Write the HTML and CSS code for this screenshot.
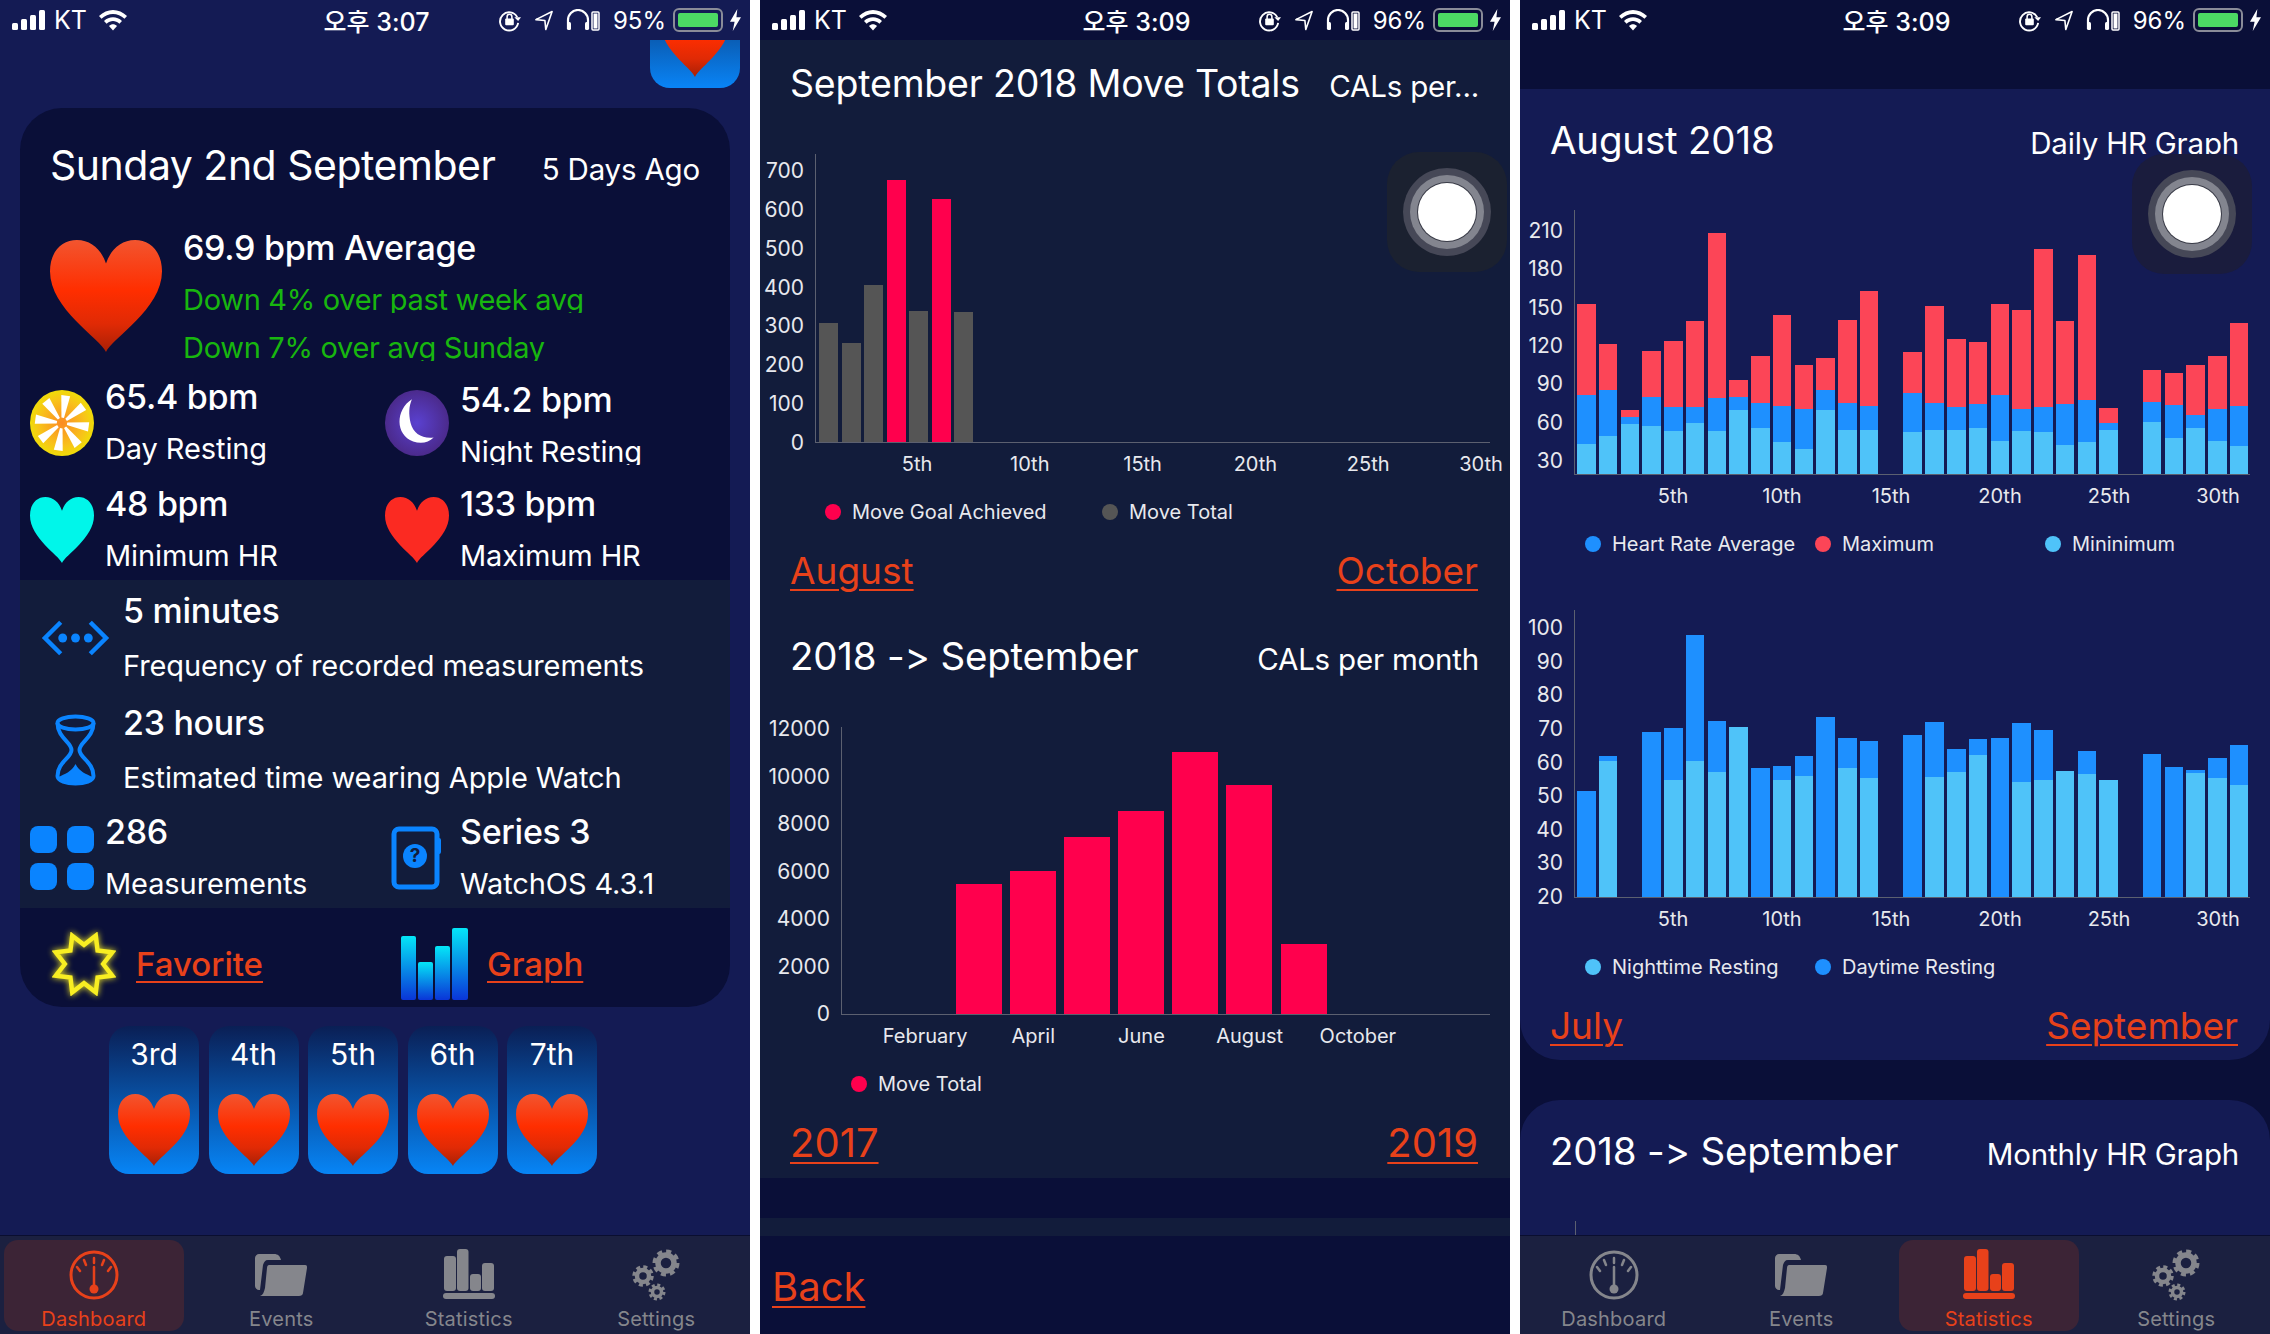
FILE: index.html
```html
<!DOCTYPE html>
<html lang="en">
<head>
  <meta charset="UTF-8">
  <title>Heart Rate Dashboard</title>
  <link rel="stylesheet" href="styles.css">
</head>
<body>
  <!-- shared shapes -->
  <svg class="defs" aria-hidden="true">
    <defs>
      <linearGradient id="heartFill" x1="0" y1="0" x2="0" y2="1">
        <stop offset="0" stop-color="#f2552f"/>
        <stop offset="0.45" stop-color="#ff2e00"/>
        <stop offset="0.75" stop-color="#e02a05"/>
        <stop offset="1" stop-color="#a82006"/>
      </linearGradient>
      <linearGradient id="graphFill" x1="0" y1="0" x2="0" y2="1">
        <stop offset="0" stop-color="#04e6f7"/>
        <stop offset="1" stop-color="#0a35d8"/>
      </linearGradient>
      <radialGradient id="sunFill">
        <stop offset="0" stop-color="#fb8a24"/>
        <stop offset="0.7" stop-color="#f8c21a"/>
        <stop offset="1" stop-color="#f0dc08"/>
      </radialGradient>
      <radialGradient id="moonFill">
        <stop offset="0" stop-color="#5a41d0"/>
        <stop offset="1" stop-color="#4b2a8c"/>
      </radialGradient>
      <symbol id="heart" viewBox="0 0 100 100" preserveAspectRatio="none">
        <path d="M50 100C45 88 0 62 0 28C0 10 11 0 24 0C37 0 46 9 50 21C54 9 63 0 76 0C89 0 100 10 100 28C100 62 55 88 50 100Z"/>
      </symbol>
      <symbol id="signal" viewBox="0 0 34 20">
        <rect x="0" y="13" width="6" height="7" rx="1.5"/><rect x="9" y="9" width="6" height="11" rx="1.5"/>
        <rect x="18" y="5" width="6" height="15" rx="1.5"/><rect x="27" y="0" width="6" height="20" rx="1.5"/>
      </symbol>
      <symbol id="wifi" viewBox="0 0 30 22">
        <path d="M1 7C9-1 21-1 29 7L26.500 9.700C19.800 3.300 10.200 3.300 3.500 9.700Z"/>
        <path d="M6 12C11 7 19 7 24 12L21.400 14.700C17.600 11.200 12.400 11.200 8.600 14.700Z"/>
        <path d="M11 17C13.500 14.800 16.500 14.800 19 17L15 21.500Z"/>
      </symbol>
      <symbol id="rotlock" viewBox="0 0 24 24">
        <path d="M20 9A9.500 9.500 0 1 0 21 15" fill="none" stroke="#fff" stroke-width="2"/>
        <path d="M17 9L24 9L21 13Z" fill="#fff"/>
        <rect x="7.500" y="10.500" width="9" height="7" rx="1" fill="#fff"/>
        <path d="M9.500 11V8.500A2.500 2.500 0 0 1 14.500 8.500V11" fill="none" stroke="#fff" stroke-width="1.600"/>
      </symbol>
      <symbol id="arrow" viewBox="0 0 20 22">
        <path d="M1 10L19 1L12 21L11 11Z" fill="none" stroke="#fff" stroke-width="1.800" stroke-linejoin="round"/>
      </symbol>
      <symbol id="phones" viewBox="0 0 34 22">
        <path d="M2 20V11A10 10 0 0 1 22 11V20" fill="none" stroke="#fff" stroke-width="2.200"/>
        <rect x="1" y="13" width="4" height="8" rx="1.500" fill="#fff"/><rect x="19" y="13" width="4" height="8" rx="1.500" fill="#fff"/>
        <rect x="26" y="3" width="7" height="18" rx="1" fill="none" stroke="#fff" stroke-width="1.500"/>
        <rect x="27.500" y="4.500" width="4" height="15" fill="#fff"/>
      </symbol>
      <symbol id="bolt" viewBox="0 0 12 24">
        <path d="M8 0L0 14H5L3 24L12 9H7Z"/>
      </symbol>
      <symbol id="gauge" viewBox="0 0 52 52">
        <circle cx="26" cy="26" r="23" fill="none" stroke="currentColor" stroke-width="3"/>
        <g stroke="currentColor" stroke-width="2.500" stroke-linecap="round">
          <line x1="26" y1="9" x2="26" y2="14"/><line x1="16" y1="11" x2="18" y2="16"/>
          <line x1="36" y1="11" x2="34" y2="16"/><line x1="9" y1="18" x2="12" y2="22"/><line x1="43" y1="18" x2="40" y2="22"/>
          <line x1="26" y1="18" x2="26" y2="37"/>
        </g>
        <circle cx="26" cy="40" r="4.500" fill="currentColor"/>
      </symbol>
      <symbol id="folder" viewBox="0 0 52 52">
        <path d="M4 5H19C23 5 25 7 26 11H13C10 11 9 13 8 16L5 41H4C2 41 0 39 0 37V9C0 7 2 5 4 5Z" fill="currentColor"/>
        <path d="M14 16H50C52 16 52 17 52 19L48 44C48 46 46 47 44 47H5C8 46 9 43 10 39L12 19C12 17 13 16 14 16Z" fill="currentColor"/>
      </symbol>
      <symbol id="statbars" viewBox="0 0 52 52">
        <rect x="1" y="7" width="12" height="35" rx="3" fill="currentColor"/><rect x="14" y="0" width="11.500" height="42" rx="3" fill="currentColor"/>
        <rect x="27" y="25" width="11" height="17" rx="3" fill="currentColor"/><rect x="39" y="14" width="12" height="28" rx="3" fill="currentColor"/>
        <rect x="0" y="44" width="52" height="6" rx="3" fill="currentColor"/>
      </symbol>
      <symbol id="gears" viewBox="0 0 50 52">
        <g fill="none" stroke="currentColor">
          <circle cx="35" cy="14" r="8" stroke-width="5.500"/><circle cx="35" cy="14" r="11.500" stroke-width="4" stroke-dasharray="5 4"/>
          <circle cx="12" cy="27" r="6" stroke-width="4.500"/><circle cx="12" cy="27" r="9" stroke-width="3.500" stroke-dasharray="4 3.070"/>
          <circle cx="26" cy="43" r="4.500" stroke-width="3.500"/><circle cx="26" cy="43" r="7" stroke-width="3" stroke-dasharray="3 2.500"/>
        </g>
      </symbol>
    </defs>
  </svg>

  <div class="phones">

    <!-- dashboard -->
    <section class="phone phone-navy">
      <div class="status status-navy">
        <div class="status-left">
          <svg class="ic-signal"><use href="#signal"/></svg><span>KT</span><svg class="ic-wifi"><use href="#wifi"/></svg>
        </div>
        <div class="status-time">오후 3:07</div>
        <div class="status-right">
          <svg class="ic-rot"><use href="#rotlock"/></svg><svg class="ic-arrow"><use href="#arrow"/></svg><svg class="ic-phones"><use href="#phones"/></svg>
          <span class="pct">95%</span><div class="battery"><div class="battery-level"></div></div><svg class="ic-bolt"><use href="#bolt"/></svg>
        </div>
      </div>
      <div class="content">
        <div class="peek">
          <div class="peek-tile"><svg class="peek-heart"><use href="#heart" fill="url(#heartFill)"/></svg></div>
        </div>
        <div class="day-card">
          <div class="day-head">
            <h1 class="title">Sunday 2nd September</h1>
            <span class="subtitle">5 Days Ago</span>
          </div>
          <div class="avg-row">
            <svg class="big-heart"><use href="#heart" fill="url(#heartFill)"/></svg>
            <div>
              <div class="value">69.9 bpm Average</div>
              <div class="label good clip">Down 4% over past week avg</div>
              <div class="label good clip raised">Down 7% over avg Sunday</div>
            </div>
          </div>
          <div class="cells">
            <div class="cell">
              <svg class="cell-icon" viewBox="0 0 100 100" preserveAspectRatio="none">
                <circle cx="50" cy="50" r="50" fill="url(#sunFill)"/>
                <g fill="#fff">
                  <polygon points="48,42 52,42 57,8 43,8" transform="rotate(8 50 50)"/>
                  <polygon points="48,42 52,42 57,8 43,8" transform="rotate(53 50 50)"/>
                  <polygon points="48,42 52,42 57,8 43,8" transform="rotate(98 50 50)"/>
                  <polygon points="48,42 52,42 57,8 43,8" transform="rotate(143 50 50)"/>
                  <polygon points="48,42 52,42 57,8 43,8" transform="rotate(188 50 50)"/>
                  <polygon points="48,42 52,42 57,8 43,8" transform="rotate(233 50 50)"/>
                  <polygon points="48,42 52,42 57,8 43,8" transform="rotate(278 50 50)"/>
                  <polygon points="48,42 52,42 57,8 43,8" transform="rotate(323 50 50)"/>
                </g>
              </svg>
              <div>
                <div class="value clip">65.4 bpm</div>
                <div class="label">Day Resting</div>
              </div>
            </div>
            <div class="cell">
              <svg class="cell-icon" viewBox="0 0 100 100" preserveAspectRatio="none">
                <circle cx="50" cy="50" r="50" fill="url(#moonFill)"/>
                <path d="M42 14C16 30 16 68 44 78C56 82 68 80 76 72C58 74 44 66 40 50C37 36 37 26 42 14Z" fill="#fff"/>
              </svg>
              <div class="nudged">
                <div class="value">54.2 bpm</div>
                <div class="label clip">Night Resting</div>
              </div>
            </div>
            <div class="cell">
              <svg class="cell-icon"><use href="#heart" fill="#00f6ea"/></svg>
              <div>
                <div class="value">48 bpm</div>
                <div class="label">Minimum HR</div>
              </div>
            </div>
            <div class="cell">
              <svg class="cell-icon"><use href="#heart" fill="#fb2a22"/></svg>
              <div>
                <div class="value">133 bpm</div>
                <div class="label">Maximum HR</div>
              </div>
            </div>
          </div>

          <div class="band">
            <div class="wide">
              <svg class="wide-icon" viewBox="0 0 70 36" fill="none" stroke="#0a84ff" stroke-width="4.500">
                <path d="M20 2L4 18L20 34"/><path d="M50 2L66 18L50 34"/>
                <g fill="#0a84ff" stroke="none"><circle cx="22" cy="18" r="4.500"/><circle cx="35" cy="18" r="4.500"/><circle cx="48" cy="18" r="4.500"/></g>
              </svg>
              <div>
                <div class="value">5 minutes</div>
                <div class="label">Frequency of recorded measurements</div>
              </div>
            </div>
            <div class="wide">
              <svg class="wide-icon tall" viewBox="0 0 42 72" fill="none" stroke="#0a84ff" stroke-width="4">
                <ellipse cx="21" cy="9" rx="18" ry="6.500"/>
                <path d="M3 9C3 24 17 28 17 36C17 44 3 48 3 62C3 72 39 72 39 62C39 48 25 44 25 36C25 28 39 24 39 9"/>
                <path d="M4 63C10 60 17 58 21 50C25 58 32 60 38 63C38 70 4 70 4 63Z" fill="#0a84ff" stroke="none"/>
              </svg>
              <div>
                <div class="value">23 hours</div>
                <div class="label">Estimated time wearing Apple Watch</div>
              </div>
            </div>
            <div class="cells">
              <div class="cell">
                <svg class="cell-icon" viewBox="0 0 64 64" fill="#0a84ff">
                  <rect x="0" y="0" width="27" height="27" rx="8"/><rect x="37" y="0" width="27" height="27" rx="8"/>
                  <rect x="0" y="37" width="27" height="27" rx="8"/><rect x="37" y="37" width="27" height="27" rx="8"/>
                </svg>
                <div>
                  <div class="value">286</div>
                  <div class="label">Measurements</div>
                </div>
              </div>
              <div class="cell">
                <svg class="cell-icon" viewBox="0 0 64 64">
                  <rect x="9" y="3" width="43" height="58" rx="5" fill="none" stroke="#0a84ff" stroke-width="5"/>
                  <rect x="51" y="12" width="5" height="16" rx="2" fill="#0a84ff"/>
                  <circle cx="30" cy="30" r="12" fill="#0a84ff"/>
                  <text class="watch-q" x="30" y="36">?</text>
                </svg>
                <div>
                  <div class="value">Series 3</div>
                  <div class="label">WatchOS 4.3.1</div>
                </div>
              </div>
            </div>
          </div>

          <div class="day-foot">
            <div class="foot-item">
              <svg class="star" viewBox="0 0 100 100">
                <polygon points="31.600,5.700 50,20 68.400,5.700 71.200,28.800 94.300,31.600 80,50 94.300,68.400 71.200,71.200 68.400,94.300 50,80 31.600,94.300 28.800,71.200 5.700,68.400 20,50 5.700,31.600 28.800,28.800" fill="none" stroke="#f8ee22" stroke-width="7"/>
              </svg>
              <a class="link link-bold">Favorite</a>
            </div>
            <div class="foot-item foot-graph">
              <svg class="graph" viewBox="0 0 68 72" fill="url(#graphFill)">
                <rect x="0" y="8" width="15" height="64" rx="2"/><rect x="17" y="34" width="15" height="38" rx="2" />
                <rect x="34" y="18" width="15" height="54" rx="2"/><rect x="51" y="0" width="16" height="72" rx="2"/>
              </svg>
              <a class="link link-bold">Graph</a>
            </div>
          </div>
        </div>

        <div class="tiles">
          <div class="tile">3rd<svg class="tile-heart"><use href="#heart" fill="url(#heartFill)"/></svg></div>
          <div class="tile">4th<svg class="tile-heart"><use href="#heart" fill="url(#heartFill)"/></svg></div>
          <div class="tile">5th<svg class="tile-heart"><use href="#heart" fill="url(#heartFill)"/></svg></div>
          <div class="tile">6th<svg class="tile-heart"><use href="#heart" fill="url(#heartFill)"/></svg></div>
          <div class="tile">7th<svg class="tile-heart"><use href="#heart" fill="url(#heartFill)"/></svg></div>
        </div>
      </div>
      <nav class="tabs">
        <div class="tab active"><svg class="tab-icon"><use href="#gauge"/></svg><span>Dashboard</span></div>
        <div class="tab"><svg class="tab-icon"><use href="#folder"/></svg><span>Events</span></div>
        <div class="tab"><svg class="tab-icon"><use href="#statbars"/></svg><span>Statistics</span></div>
        <div class="tab"><svg class="tab-icon"><use href="#gears"/></svg><span>Settings</span></div>
      </nav>
    </section>

    <!-- move totals -->
    <section class="phone phone-slate">
      <div class="status status-dark">
        <div class="status-left">
          <svg class="ic-signal"><use href="#signal"/></svg><span>KT</span><svg class="ic-wifi"><use href="#wifi"/></svg>
        </div>
        <div class="status-time">오후 3:09</div>
        <div class="status-right">
          <svg class="ic-rot"><use href="#rotlock"/></svg><svg class="ic-arrow"><use href="#arrow"/></svg><svg class="ic-phones"><use href="#phones"/></svg>
          <span class="pct">96%</span><div class="battery"><div class="battery-level"></div></div><svg class="ic-bolt"><use href="#bolt"/></svg>
        </div>
      </div>
      <div class="content">
        <div class="sec-head head-first">
          <h2 class="title">September 2018 Move Totals</h2>
          <span class="subtitle">CALs per...</span>
        </div>
        <div class="chart chart-days" id="moveChart">
          <div class="yaxis">
            <span>700</span><span>600</span><span>500</span><span>400</span><span>300</span><span>200</span><span>100</span><span>0</span>
          </div>
          <div class="plot"></div>
        </div>
        <div class="xaxis x-days">
          <span>5th</span><span>10th</span><span>15th</span><span>20th</span><span>25th</span><span>30th</span>
        </div>
        <div class="legend">
          <span class="key key-first"><i class="dot pink"></i>Move Goal Achieved</span>
          <span class="key key-second"><i class="dot grey"></i>Move Total</span>
        </div>
        <div class="nav-links">
          <a class="link">August</a>
          <a class="link">October</a>
        </div>
        <div class="sec-head head-second">
          <h2 class="title">2018 -&gt; September</h2>
          <span class="subtitle">CALs per month</span>
        </div>
        <div class="chart chart-months" id="monthChart">
          <div class="yaxis">
            <span>12000</span><span>10000</span><span>8000</span><span>6000</span><span>4000</span><span>2000</span><span>0</span>
          </div>
          <div class="plot"></div>
        </div>
        <div class="xaxis x-months">
          <span>February</span><span>April</span><span>June</span><span>August</span><span>October</span>
        </div>
        <div class="legend legend-months">
          <span class="key"><i class="dot pink"></i>Move Total</span>
        </div>
        <div class="nav-links">
          <a class="link link-year">2017</a>
          <a class="link link-year">2019</a>
        </div>
      </div>
      <div class="strip-dark"></div>
      <div class="strip-slate"></div>
      <div class="back-bar"><a class="link link-back">Back</a></div>
      <div class="touch touch-slate"><div class="touch-dot"></div></div>
    </section>

    <!-- heart rate graphs -->
    <section class="phone phone-dark">
      <div class="status status-dark">
        <div class="status-left">
          <svg class="ic-signal"><use href="#signal"/></svg><span>KT</span><svg class="ic-wifi"><use href="#wifi"/></svg>
        </div>
        <div class="status-time">오후 3:09</div>
        <div class="status-right">
          <svg class="ic-rot"><use href="#rotlock"/></svg><svg class="ic-arrow"><use href="#arrow"/></svg><svg class="ic-phones"><use href="#phones"/></svg>
          <span class="pct">96%</span><div class="battery"><div class="battery-level"></div></div><svg class="ic-bolt"><use href="#bolt"/></svg>
        </div>
      </div>
      <div class="content">
        <div class="graph-card">
          <div class="sec-head head-graph">
            <h2 class="title">August 2018</h2>
            <span class="subtitle">Daily HR Graph</span>
          </div>
          <div class="chart chart-hr" id="hrChart">
            <div class="yaxis">
              <span>210</span><span>180</span><span>150</span><span>120</span><span>90</span><span>60</span><span>30</span>
            </div>
            <div class="plot"></div>
          </div>
          <div class="xaxis x-hr">
            <span>5th</span><span>10th</span><span>15th</span><span>20th</span><span>25th</span><span>30th</span>
          </div>
          <div class="legend legend-hr">
            <span class="key key-a"><i class="dot blue"></i>Heart Rate Average</span>
            <span class="key key-b"><i class="dot red"></i>Maximum</span>
            <span class="key key-c"><i class="dot sky"></i>Mininimum</span>
          </div>
          <div class="chart chart-rest" id="restChart">
            <div class="yaxis">
              <span>100</span><span>90</span><span>80</span><span>70</span><span>60</span><span>50</span><span>40</span><span>30</span><span>20</span>
            </div>
            <div class="plot"></div>
          </div>
          <div class="xaxis x-hr">
            <span>5th</span><span>10th</span><span>15th</span><span>20th</span><span>25th</span><span>30th</span>
          </div>
          <div class="legend legend-hr">
            <span class="key key-a"><i class="dot sky"></i>Nighttime Resting</span>
            <span class="key key-b"><i class="dot blue"></i>Daytime Resting</span>
          </div>
          <div class="nav-links">
            <a class="link">July</a>
            <a class="link">September</a>
          </div>
        </div>
        <div class="graph-card graph-card-next">
          <div class="sec-head head-graph">
            <h2 class="title">2018 -&gt; September</h2>
            <span class="subtitle">Monthly HR Graph</span>
          </div>
          <div class="axis-stub"></div>
        </div>
      </div>
      <nav class="tabs">
        <div class="tab"><svg class="tab-icon"><use href="#gauge"/></svg><span>Dashboard</span></div>
        <div class="tab"><svg class="tab-icon"><use href="#folder"/></svg><span>Events</span></div>
        <div class="tab active"><svg class="tab-icon"><use href="#statbars"/></svg><span>Statistics</span></div>
        <div class="tab"><svg class="tab-icon"><use href="#gears"/></svg><span>Settings</span></div>
      </nav>
      <div class="touch touch-dark"><div class="touch-dot"></div></div>
    </section>
  </div>

  <script>
    // each bar is a list of [height in px, colour class], bottom segment first
    function drawBars(id, bars) {
      const plot = document.querySelector('#' + id + ' .plot');
      bars.forEach(parts => {
        const bar = document.createElement('div');
        bar.className = 'bar';
        let below = 0;
        parts.forEach(([top, cls]) => {
          const seg = document.createElement('div');
          seg.className = 'seg ' + cls;
          seg.style.height = (top - below) + 'px';
          bar.prepend(seg);
          below = top;
        });
        plot.appendChild(bar);
      });
    }

    // move totals, grey days and goal days
    drawBars('moveChart', [
      [[119, 'grey']], [[99, 'grey']], [[157, 'grey']], [[262, 'pink']], [[131, 'grey']], [[243, 'pink']], [[130, 'grey']]
    ]);
    drawBars('monthChart', [[[130, 'pink']], [[143, 'pink']], [[177, 'pink']], [[203, 'pink']], [[262, 'pink']], [[229, 'pink']], [[70, 'pink']]]);

    // [minimum, average, maximum] per day of August
    const hr = [
      [30, 79, 170], [38, 84, 130], [50, 57, 64], [48, 77, 123], [43, 67, 133], [51, 67, 153], [43, 76, 241],
      [64, 77, 94], [46, 71, 118], [32, 68, 159], [25, 65, 109], [64, 84, 116], [44, 71, 154], [44, 68, 183], null,
      [42, 81, 122], [44, 71, 168], [44, 67, 135], [46, 70, 132], [33, 79, 170], [43, 65, 164], [42, 67, 225],
      [29, 70, 153], [32, 74, 219], [44, 51, 66], null, [52, 72, 104], [36, 69, 101], [46, 59, 109], [33, 65, 118], [28, 68, 151]
    ];
    drawBars('hrChart', hr.map(d => d ? [[d[0], 'sky'], [d[1], 'blue'], [d[2], 'red']] : []));

    // [night, day] resting per day, 0 where one of them is missing
    const rest = [
      [0, 106], [136, 141], null, [0, 165], [117, 169], [136, 262], [125, 176], [170, 0], [0, 129], [117, 131], [121, 141],
      [0, 180], [129, 159], [119, 156], null, [0, 162], [120, 175], [125, 148], [142, 158], [0, 159], [115, 174], [117, 167],
      [126, 0], [123, 146], [117, 0], null, [0, 143], [0, 130], [124, 127], [119, 139], [112, 152]
    ];
    drawBars('restChart', rest.map(d => {
      if (!d) return [];
      const parts = [];
      if (d[0]) parts.push([d[0], 'sky']);
      if (d[1]) parts.push([d[1], 'blue']);
      return parts;
    }));
  </script>
</body>
</html>
```
FILE: styles.css
```css
* { box-sizing: border-box; }

body {
  margin: 0;
  background: #fff;
  font-family: Inter, "Noto Sans CJK KR", "Liberation Sans", sans-serif;
  color: #fff;
}

.defs { position: absolute; width: 0; height: 0; }

.phones { display: flex; gap: 10px; }

.phone {
  position: relative;
  width: 750px;
  height: 1334px;
  flex: none;
  display: flex;
  flex-direction: column;
  overflow: hidden;
}
.phone-navy { background: #141b54; }
.phone-slate { background: #121c3b; }
.phone-dark { background: #0a0f38; }

.content { flex: 1; min-height: 0; overflow: hidden; }

/* status bar */
.status {
  flex: none;
  height: 40px;
  display: grid;
  grid-template-columns: 1fr auto 1fr;
  align-items: center;
  font-size: 25px;
  padding: 0 9px 0 12px;
}
.status-navy { background: #141b54; }
.status-dark { background: #0a0f38; }
.status-left { display: flex; align-items: center; }
.status-left span { margin: 0 11px 0 8px; }
.status-right { display: flex; align-items: center; justify-content: flex-end; }
.status-time { font-weight: 500; }
.status svg { fill: #fff; flex: none; }
.ic-signal { width: 34px; height: 20px; }
.ic-wifi { width: 30px; height: 22px; }
.ic-rot { width: 23px; height: 24px; }
.ic-arrow { width: 18px; height: 21px; margin-left: 14px; }
.ic-phones { width: 34px; height: 22px; margin-left: 13px; }
.pct { margin-left: 13px; font-size: 24px; }
.battery {
  width: 50px;
  height: 24px;
  margin-left: 7px;
  padding: 3px;
  border: 2px solid #8a8c98;
  border-radius: 6px;
}
.battery-level { height: 100%; background: #4cd964; border-radius: 2px; }
.ic-bolt { width: 11px; height: 24px; margin-left: 7px; }

/* dashboard */
.peek { height: 68px; display: flex; justify-content: flex-end; padding-right: 10px; }
.peek-tile {
  width: 90px;
  height: 48px;
  overflow: hidden;
  border-radius: 0 0 20px 20px;
  background: linear-gradient(#0a5eb6, #0984f6);
  display: flex;
  justify-content: center;
}
.peek-heart { width: 68px; height: 73px; margin-top: -36px; flex: none; }

.day-card {
  margin: 0 20px;
  height: 899px;
  background: #0a0f38;
  border-radius: 42px;
  overflow: hidden;
}
.day-head {
  height: 114px;
  padding: 0 30px;
  display: flex;
  justify-content: space-between;
  align-items: baseline;
  line-height: 114px;
}
.title { margin: 0; font-size: 38.500px; font-weight: 400; white-space: nowrap; letter-spacing: -0.2px; }
.day-head .title { font-size: 41px; letter-spacing: -0.5px; }
.head-first .title { font-size: 37.500px; }
.subtitle { font-size: 29.500px; white-space: nowrap; letter-spacing: -0.2px; }

.value { font-size: 34px; font-weight: 500; line-height: 52px; height: 52px; white-space: nowrap; letter-spacing: -0.3px; }
.label { font-size: 29px; line-height: 52px; height: 52px; white-space: nowrap; letter-spacing: -0.1px; }
.good { color: #18b60f; letter-spacing: -0.3px; }
.clip { height: 39px; margin-bottom: 13px; overflow: hidden; }
.raised { margin-top: -4px; }

.avg-row { height: 149px; display: flex; padding-left: 30px; }
.big-heart { width: 112px; height: 112px; margin: 18px 21px 0 0; flex: none; }

.cells { display: grid; grid-template-columns: 355px 355px; row-gap: 3px; }
.cell { display: flex; align-items: center; gap: 11px; padding-left: 10px; height: 104px; }
.cell-icon { width: 64px; height: 66px; flex: none; }
.nudged { margin-top: 6px; }

.band { height: 328px; margin-top: -2px; background: #121c3b; padding-top: 2px; }
.wide { height: 112px; display: flex; align-items: center; gap: 13px; padding-left: 21px; }
.wide .value, .wide .label { height: 55px; line-height: 55px; }
.wide-icon { width: 69px; height: 36px; flex: none; }
.wide-icon.tall { height: 72px; }
.watch-q { font-size: 19px; font-weight: 700; fill: #121c3b; text-anchor: middle; }

.day-foot { height: 103px; padding-top: 8px; display: grid; grid-template-columns: 355px 355px; }
.foot-item { display: flex; align-items: center; gap: 20px; padding-left: 32px; }
.foot-graph { gap: 18px; padding-left: 26px; }
.star { width: 64px; height: 64px; filter: drop-shadow(0 0 3px #f8ee22); }
.graph { width: 68px; height: 72px; }

.link { color: #e8411a; text-decoration: underline; text-underline-offset: 5px; text-decoration-thickness: 2px; font-size: 37px; }
.link-bold { font-size: 33px; font-weight: 500; }
.link-year { font-size: 40px; }

.tiles { display: flex; gap: 9.500px; padding: 19px 0 0 109px; }
.tile {
  width: 90px;
  height: 148px;
  border-radius: 20px;
  background: linear-gradient(#0a1f55, #0785f6);
  text-align: center;
  font-size: 30px;
  line-height: 52px;
  padding-top: 2px;
}
.tile-heart { display: block; width: 72px; height: 72px; margin: 14px auto 0; }

/* tab bar */
.tabs {
  flex: none;
  height: 99px;
  display: grid;
  grid-template-columns: repeat(4, 1fr);
  background: #1b2040;
  border-top: 1px solid #0a0e30;
  color: #85868c;
}
.tab {
  margin: 4px;
  border-radius: 14px;
  display: flex;
  flex-direction: column;
  align-items: center;
  font-size: 20px;
  letter-spacing: 0.2px;
  padding-top: 9px;
}
.tab.active { background: #3c2436; color: #e8411a; }
.tab-icon { width: 52px; height: 52px; margin-bottom: 6px; }

/* charts */
.sec-head {
  display: flex;
  justify-content: space-between;
  align-items: baseline;
  padding: 0 31px 0 30px;
  line-height: 60px;
}
.head-first { height: 114px; padding-top: 14px; }
.head-second { height: 101px; margin-top: 30px; }
.head-graph { height: 121px; padding-top: 21px; }

.chart { display: flex; margin-right: 20px; }
.yaxis { display: flex; flex-direction: column; justify-content: space-between; text-align: right; font-size: 21px; line-height: 26px; color: #e8e9ee; }
.plot {
  flex: 1;
  display: flex;
  align-items: flex-end;
  border-left: 1px solid #5c6070;
  border-bottom: 1px solid #5c6070;
}
.bar { display: flex; flex-direction: column; flex: none; }
.seg { width: 100%; }
.pink { background: #ff004d; }
.grey { background: #555; }
.blue { background: #1e90ff; }
.red { background: #fc4557; }
.sky { background: #4fc3f9; }

.chart-days { height: 289px; }
.chart-days .yaxis { width: 44px; margin: 4px 11px -13px 0; }
.chart-days .plot { padding-left: 3px; gap: 3.500px; }
.chart-days .bar { width: 19px; }

.chart-months { height: 288px; }
.chart-months .yaxis { width: 70px; margin: -11px 11px -12px 0; }
.chart-months .plot { padding-left: 114px; gap: 8.100px; }
.chart-months .bar { width: 46px; }

.chart-hr { height: 265px; }
.chart-hr .yaxis { width: 43px; margin: 8px 11px 1px 0; }
.chart-rest { height: 288px; margin-top: 51px; }
.chart-rest .yaxis { width: 43px; margin: 5px 11px -12px 0; }
.chart-hr .plot, .chart-rest .plot { padding-left: 2px; gap: 3.270px; }
.chart-hr .bar, .chart-rest .bar { width: 18.500px; }

.xaxis { display: grid; margin-top: 8px; font-size: 20px; line-height: 26px; text-align: center; color: #e8e9ee; }
.x-days { grid-template-columns: repeat(6, 112.800px); padding-left: 100.600px; }
.x-months { grid-template-columns: repeat(5, 108.200px); padding-left: 111px; }
.x-hr { grid-template-columns: repeat(6, 109px); padding-left: 98.500px; }

.legend { display: flex; margin-top: 20px; font-size: 20px; line-height: 30px; color: #e8e9ee; height: 30px; white-space: nowrap; }
.key { display: flex; align-items: center; }
.dot { width: 16px; height: 16px; border-radius: 50%; margin-right: 11px; flex: none; }
.key-first { margin-left: 65px; width: 277px; }
.legend-months { padding-left: 91px; }
.key-a { margin-left: 65px; width: 230px; }
.key-b { width: 230px; }

.nav-links { display: flex; justify-content: space-between; padding: 0 32px 0 30px; margin-top: 19px; height: 50px; line-height: 50px; }
.graph-card {
  margin-top: 49px;
  background: #141b54;
  border-radius: 0 0 40px 40px;
  padding-bottom: 9px;
}
.graph-card-next { margin-top: 40px; height: 200px; border-radius: 40px 40px 0 0; }
.axis-stub { width: 1px; height: 20px; margin-left: 55px; background: #5c6070; }

.strip-dark { flex: none; height: 40px; background: #0a0f38; }
.strip-slate { flex: none; height: 18px; }
.back-bar { flex: none; height: 98px; background: #0a0f38; padding-left: 12px; line-height: 102px; }
.link-back { font-size: 40px; }
.phone-slate .content { padding-bottom: 11px; }

/* floating assistive touch button */
.touch {
  position: absolute;
  width: 120px;
  height: 120px;
  border-radius: 32px;
  display: flex;
  align-items: center;
  justify-content: center;
}
.touch-slate { left: 627px; top: 152px; background: #1b2130; }
.touch-dark { left: 612px; top: 154px; background: #1a1c3d; }
.touch-dot {
  width: 58px;
  height: 58px;
  border-radius: 50%;
  background: #fff;
  box-shadow: 0 0 0 1px #3a3c48, 0 0 0 8px #83858f, 0 0 0 15px #464857;
}
```
